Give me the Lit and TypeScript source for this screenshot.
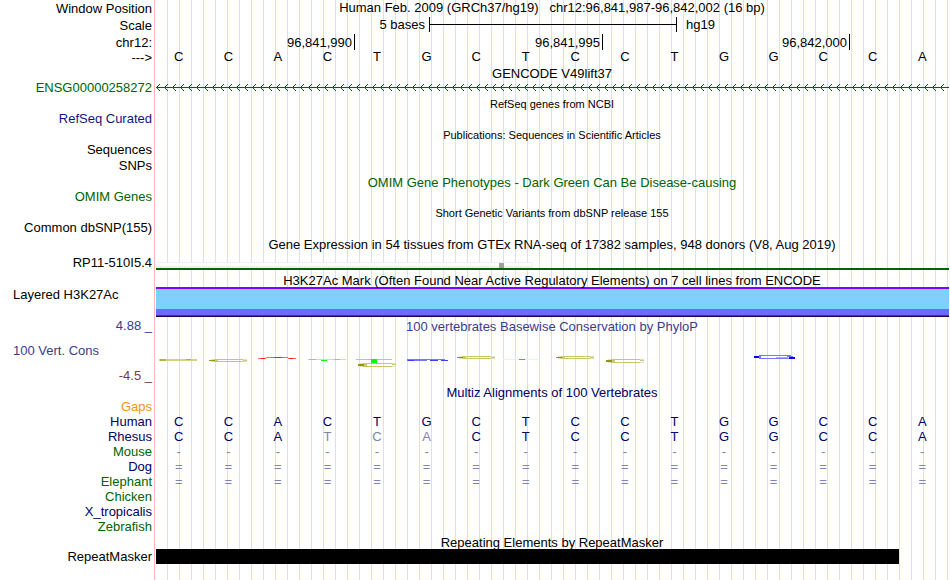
import { LitElement, html, svg, css, nothing } from 'lit';
import { customElement, property } from 'lit/decorators.js';
import { classMap } from 'lit/directives/class-map.js';

const SEQUENCE = 'CCACTGCTCCTGGCCA';

interface Species {
  name: string;
  tone: string;
  bases?: string;
}

const SPECIES: Species[] = [
  { name: 'Gaps', tone: 'orange' },
  { name: 'Human', tone: 'navy', bases: SEQUENCE },
  { name: 'Rhesus', tone: 'navy', bases: 'CCATCACTCCTGGCCA' },
  { name: 'Mouse', tone: 'green', bases: '-'.repeat(16) },
  { name: 'Dog', tone: 'navy', bases: '='.repeat(16) },
  { name: 'Elephant', tone: 'green', bases: '='.repeat(16) },
  { name: 'Chicken', tone: 'green' },
  { name: 'X_tropicalis', tone: 'navy' },
  { name: 'Zebrafish', tone: 'green' },
];

const tones = css`
  .navy {
    color: #000064;
  }
  .blue {
    color: #14147d;
  }
  .green {
    color: #006400;
  }
  .orange {
    color: #f09614;
  }
  .indigo {
    color: #3c3c8c;
  }
  .maroon {
    color: #783c3c;
  }
`;

@customElement('base-row')
export class BaseRow extends LitElement {
  @property() bases = '';
  // bases that differ from this sequence are dimmed
  @property() reference = '';

  static styles = css`
    :host {
      display: grid;
      grid-template-columns: repeat(16, minmax(0, 1fr));
      padding-right: 3px;
      text-align: center;
      line-height: 15px;
    }

    .dim {
      color: #8282b4;
    }
  `;

  render() {
    return [...this.bases].map((base, i) => {
      const dim = this.reference !== '' && base !== this.reference[i];
      return html`<span class=${classMap({ dim })}>${base}</span>`;
    });
  }
}

@customElement('browser-track')
export class BrowserTrack extends LitElement {
  @property() heading = '';
  @property() tone = '';
  @property({ type: Boolean }) small = false;

  static styles = [
    tones,
    css`
      :host {
        display: grid;
        grid-template-columns: 154px minmax(0, 1fr);
      }

      .labels {
        display: flex;
        flex-direction: column;
        padding: 14px 2px 0 13px;
        text-align: right;
      }

      h2 {
        margin: 0;
        height: 14px;
        font-size: 13px;
        font-weight: normal;
        line-height: 15px;
        text-align: center;
        white-space: nowrap;
      }

      .small {
        font-size: 11px;
      }
    `,
  ];

  render() {
    return html`
      <div class="labels"><slot name="label"></slot></div>
      <div>
        <h2 class="${this.tone} ${this.small ? 'small' : ''}">${this.heading}</h2>
        <slot></slot>
      </div>
    `;
  }
}

@customElement('conservation-logo')
export class ConservationLogo extends LitElement {
  static styles = css`
    :host {
      display: block;
      margin: 0 1px 0 2px;
    }

    svg {
      display: block;
      width: 100%;
      height: 50px;
    }
  `;

  // a "C" flattened to a few rows: two thin strokes, joined on the left
  private letterC(x: number, y: number, rows: number) {
    return svg`
      <g transform="translate(${x} ${y})">
        <path fill="#c8c864" d="M5 0h29v1h-29z M5 ${rows - 1}h29v1h-29z" />
        <path fill="#deded0" d="M2 0h3v1h-3z M34 0h4v1h-4z M2 ${rows - 1}h3v1h-3z M34 ${rows - 1}h4v1h-4z" />
        <path fill="#969600" d="M0 1h6v${rows - 2}h-6z" />
        <path fill="#c8c878" d="M6 1h3v${rows - 2}h-3z M34 1h4v1h-4z" />
      </g>
    `;
  }

  render() {
    return html`
      <svg viewBox="0 0 793 50" preserveAspectRatio="none" shape-rendering="crispEdges" aria-hidden="true">
        <path fill="#d2d282" d="M3 26h38v2h-38z" />
        <path fill="#b4b43c" d="M4 26h6v2h-6z M30 26h5v1h-5z" />
        ${this.letterC(53, 26, 3)}
        <path fill="#ff6464" d="M110 24h22v1h-22z M102 25h8v1h-8z M132 25h8v1h-8z" />
        <path fill="#ff1e1e" d="M118 24h8v1h-8z M105 25h4v1h-4z M133 25h4v1h-4z" />
        <path fill="#c8e6a0" d="M152 26h38v1h-38z" />
        <path fill="#b4c850" d="M153 26h7v1h-7z M178 26h6v1h-6z" />
        <path fill="#00ff00" d="M165 27h6v1h-6z" />
        <path fill="#64ff64" d="M200 26h36v1h-36z" />
        <path fill="#00ff00" d="M215 26h6v4h-6z" />
        ${this.letterC(202, 30, 4)}
        <path fill="#7878ff" d="M251 26h38v1h-38z M251 27h20v1h-20z" />
        <path fill="#3c3cff" d="M252 27h6v1h-6z M274 27h8v1h-8z M285 27h7v1h-7z" />
        ${this.letterC(301, 23, 3)}
        <path fill="#dcffdc" d="M347 26h37v1h-37z" />
        <path fill="#00e600" d="M363 26h6v1h-6z" />
        ${this.letterC(400, 23, 3)}
        ${this.letterC(450, 26, 4)}
        <path fill="#7878ff" d="M603 22h32v1h-32z M603 25h32v1h-32z M600 23h5v2h-5z M631 23h6v1h-6z" />
        <path fill="#aaaaff" d="M620 24h12v1h-12z" />
        <path fill="#0000ff" d="M598 23h5v2h-5z M633 24h6v2h-6z" />
      </svg>
    `;
  }
}

@customElement('app-root')
export class AppRoot extends LitElement {
  static styles = [
    tones,
    css`
      :host {
        display: block;
        box-sizing: border-box;
        min-height: 100vh;
        overflow: hidden;
        color: #000;
        font: 13px/15px 'Liberation Sans', Arial, sans-serif;
        background-color: #fff;
        /* page edge over the vertical guide lines */
        background-image: linear-gradient(90deg, #fff 154px, #ffb4b4 154px, #ffb4b4 155px, #fff 155px),
          linear-gradient(90deg, #dcdcff 1px, transparent 1px);
        background-size: 157px 100%, 12px 100%;
        background-position: 0 0, 11px 0;
        background-repeat: no-repeat, repeat;
      }

      .ruler {
        display: grid;
        grid-template-columns: 154px minmax(0, 1fr);
        grid-template-rows: 17px 17px 15px 17px;
      }

      .ruler > .name {
        padding: 1px 2px 0 0;
        text-align: right;
      }

      h1 {
        margin: 0;
        font-size: 13px;
        font-weight: normal;
        text-align: center;
        white-space: pre;
      }

      .scale {
        display: grid;
        grid-template-columns: 275fr 248fr 270fr;
        padding-right: 3px;
      }

      .scale .unit {
        padding-right: 4px;
        text-align: right;
      }

      .scale .assembly {
        padding-left: 9px;
      }

      .bar {
        height: 15px;
        border: solid #000;
        border-width: 0 1px;
        background: linear-gradient(#000, #000) 0 7px / 100% 1px no-repeat;
      }

      .ticks {
        display: grid;
        grid-template-columns: 201fr 248fr 247fr 97fr;
        padding-right: 3px;
        text-align: right;
      }

      .ticks span {
        padding: 1px 2px 0 0;
        border-right: 1px solid #000;
      }

      .gene {
        display: block;
        width: calc(100% - 3px);
        height: 17px;
        margin-left: 2px;
      }

      .roomy {
        padding-bottom: 2px;
      }

      .left {
        text-align: left;
      }

      .next {
        margin-top: 1px;
      }

      .lowered {
        margin-top: 4px;
      }

      .gtex {
        margin: 11px 1px 3px 2px;
        border-bottom: 2px solid #006400;
      }

      .expression {
        box-sizing: border-box;
        width: 47.6%;
        height: 6px;
        border: solid #f0f0f0;
        border-width: 1px 1px 2px 0;
        background: #fff;
      }

      .expression i {
        display: block;
        width: 5px;
        height: 5px;
        margin-left: 91%;
        background: #a0a0a0;
      }

      .histone {
        height: 20px;
        margin: 0 1px 1px 2px;
        border-top: 2px solid #8000ff;
        background: #80d0ff;
        padding-bottom: 8px;
      }

      .histone div {
        height: 6px;
        margin-top: 20px;
        border-bottom: 1px solid #4b2daa;
        background: #6a6aff;
        box-shadow: 0 1px #280050;
      }

      .conservation {
        padding: 1px 0 2px;
      }

      .upper {
        margin-top: -15px;
      }

      .middle {
        margin: 10px 0;
      }

      .alignments {
        padding-bottom: 1px;
      }

      .species {
        height: 15px;
      }

      .repeat {
        width: calc(100% * 743 / 796);
        height: 15px;
        margin-left: 2px;
        background: #000;
      }
    `,
  ];

  private renderRuler() {
    return html`
      <header class="ruler">
        <span class="name">Window Position</span>
        <h1>Human Feb. 2009 (GRCh37/hg19)   chr12:96,841,987-96,842,002 (16 bp)</h1>
        <span class="name">Scale</span>
        <div class="scale">
          <span class="unit">5 bases</span>
          <div class="bar"></div>
          <span class="assembly">hg19</span>
        </div>
        <span class="name">chr12:</span>
        <div class="ticks">
          <span>96,841,990</span>
          <span>96,841,995</span>
          <span>96,842,000</span>
        </div>
        <span class="name">---&gt;</span>
        <base-row .bases=${SEQUENCE}></base-row>
      </header>
    `;
  }

  render() {
    return html`
      ${this.renderRuler()}
      <main>
        <browser-track heading="GENCODE V49lift37">
          <span slot="label" class="green">ENSG00000258272</span>
          <svg class="gene" aria-hidden="true" shape-rendering="crispEdges">
            <defs>
              <pattern id="strand" width="8" height="17" patternUnits="userSpaceOnUse">
                <path fill="#006400" d="M0 7h8v1h-8z M1 6h1v3h-1z M2 5h1v1h-1z M2 9h1v1h-1z M3 4h1v1h-1z M3 10h1v1h-1z" />
              </pattern>
            </defs>
            <rect width="100%" height="17" fill="url(#strand)" />
          </svg>
        </browser-track>

        <browser-track class="roomy" heading="RefSeq genes from NCBI" small>
          <span slot="label" class="blue">RefSeq Curated</span>
        </browser-track>

        <browser-track class="roomy" heading="Publications: Sequences in Scientific Articles" small>
          <span slot="label">Sequences</span>
          <span slot="label" class="next">SNPs</span>
        </browser-track>

        <browser-track class="roomy" heading="OMIM Gene Phenotypes - Dark Green Can Be Disease-causing" tone="green">
          <span slot="label" class="green">OMIM Genes</span>
        </browser-track>

        <browser-track class="roomy" heading="Short Genetic Variants from dbSNP release 155" small>
          <span slot="label">Common dbSNP(155)</span>
        </browser-track>

        <browser-track
          heading="Gene Expression in 54 tissues from GTEx RNA-seq of 17382 samples, 948 donors (V8, Aug 2019)"
        >
          <span slot="label" class="lowered">RP11-510I5.4</span>
          <div class="gtex">
            <div class="expression"><i></i></div>
          </div>
        </browser-track>

        <browser-track heading="H3K27Ac Mark (Often Found Near Active Regulatory Elements) on 7 cell lines from ENCODE">
          <span slot="label" class="left">Layered H3K27Ac</span>
          <div class="histone"><div></div></div>
        </browser-track>

        <browser-track
          class="conservation"
          heading="100 vertebrates Basewise Conservation by PhyloP"
          tone="indigo"
        >
          <span slot="label" class="indigo upper">4.88 _</span>
          <span slot="label" class="indigo left middle">100 Vert. Cons</span>
          <span slot="label" class="maroon">-4.5 _</span>
          <conservation-logo></conservation-logo>
        </browser-track>

        <browser-track class="alignments" heading="Multiz Alignments of 100 Vertebrates" tone="navy">
          ${SPECIES.map(
            (s) => html`
              <span slot="label" class=${s.tone}>${s.name}</span>
              <div class="species navy">
                ${s.bases ? html`<base-row .bases=${s.bases} .reference=${SEQUENCE}></base-row>` : nothing}
              </div>
            `,
          )}
        </browser-track>

        <browser-track heading="Repeating Elements by RepeatMasker">
          <span slot="label">RepeatMasker</span>
          <div class="repeat"></div>
        </browser-track>
      </main>
    `;
  }
}
